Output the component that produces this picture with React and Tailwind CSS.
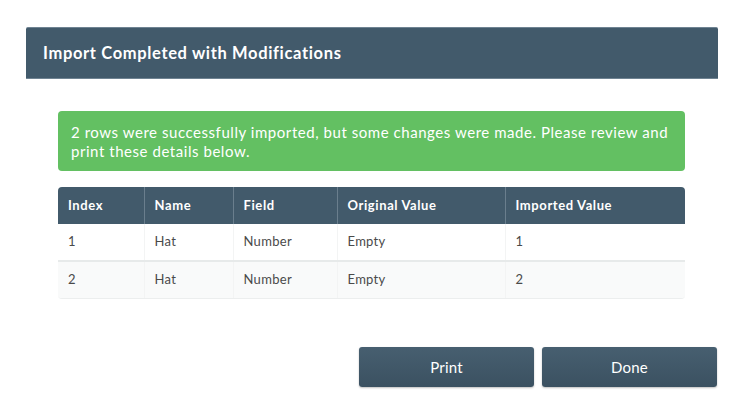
import React from 'react';

const rows = [
  { index: 1, name: 'Hat', field: 'Number', original: 'Empty', imported: '1' },
  { index: 2, name: 'Hat', field: 'Number', original: 'Empty', imported: '2' },
];

const columns = [
  { label: 'Index', width: 'w-[86px]' },
  { label: 'Name', width: 'w-[89px]' },
  { label: 'Field', width: 'w-[104px]' },
  { label: 'Original Value', width: 'w-[168px]' },
  { label: 'Imported Value', width: 'w-[180px]' },
];

const App = () => {
  return (
    <div className="w-[743px] h-[412px] bg-white pt-[27px] pl-[26px] font-['Lato','Liberation_Sans',sans-serif]">
      <div className="w-[692px]">
        {/* Modal header */}
        <div className="h-[52px] bg-[#425a6b] rounded-t-[2px] flex items-center px-[17px] border-y border-[#6f8392]">
          <h2 className="text-[16.5px] font-bold text-white tracking-[0.65px]">Import Completed with Modifications</h2>
        </div>

        {/* Body */}
        <div className="pt-[32px] pl-[32px] pr-[33px]">
          <div className="h-[60px] bg-[#63c062] rounded-[4px] px-[13px] pt-[12px] text-[15px] leading-[19px] text-white tracking-[0.55px]">
            2 rows were successfully imported, but some changes were made. Please review and print these details below.
          </div>

          <div className="mt-[16px] rounded-[4px] overflow-hidden border-b border-[#eceeee]">
            <table className="w-full border-collapse text-[13px]">
              <thead>
                <tr className="bg-[#425a6b] h-[37px]">
                  {columns.map((col, i) => (
                    <th
                      key={col.label}
                      className={`${col.width} text-left font-bold text-white pl-[10px] tracking-[0.6px] ${i < columns.length - 1 ? 'border-r border-[#6a7e8d]' : ''}`}
                    >
                      {col.label}
                    </th>
                  ))}
                </tr>
              </thead>
              <tbody>
                {rows.map((row, r) => (
                  <tr
                    key={row.index}
                    className={`h-[37px] text-[#4a4a4a] tracking-[0.3px] ${r === 0 ? 'bg-white border-b-2 border-[#e7eaea]' : 'bg-[#f9fafa]'}`}
                  >
                    <td className="pl-[10px] border-r border-[#f3f4f4]">{row.index}</td>
                    <td className="pl-[10px] border-r border-[#f3f4f4]">{row.name}</td>
                    <td className="pl-[10px] border-r border-[#f3f4f4]">{row.field}</td>
                    <td className="pl-[10px] border-r border-[#f3f4f4]">{row.original}</td>
                    <td className="pl-[10px]">{row.imported}</td>
                  </tr>
                ))}
              </tbody>
            </table>
          </div>
        </div>

        {/* Footer buttons */}
        <div className="flex justify-end gap-[8px] mt-[48px] pr-[1px]">
          <button className="w-[175px] h-[40px] rounded-[3px] bg-gradient-to-b from-[#475f70] to-[#3b5161] text-white text-[15px] tracking-[0.2px] shadow-[0_1px_2px_rgba(0,0,0,0.25)]">
            Print
          </button>
          <button className="w-[175px] h-[40px] rounded-[3px] bg-gradient-to-b from-[#475f70] to-[#3b5161] text-white text-[15px] tracking-[0.2px] shadow-[0_1px_2px_rgba(0,0,0,0.25)]">
            Done
          </button>
        </div>
      </div>
    </div>
  );
};

export default App;
